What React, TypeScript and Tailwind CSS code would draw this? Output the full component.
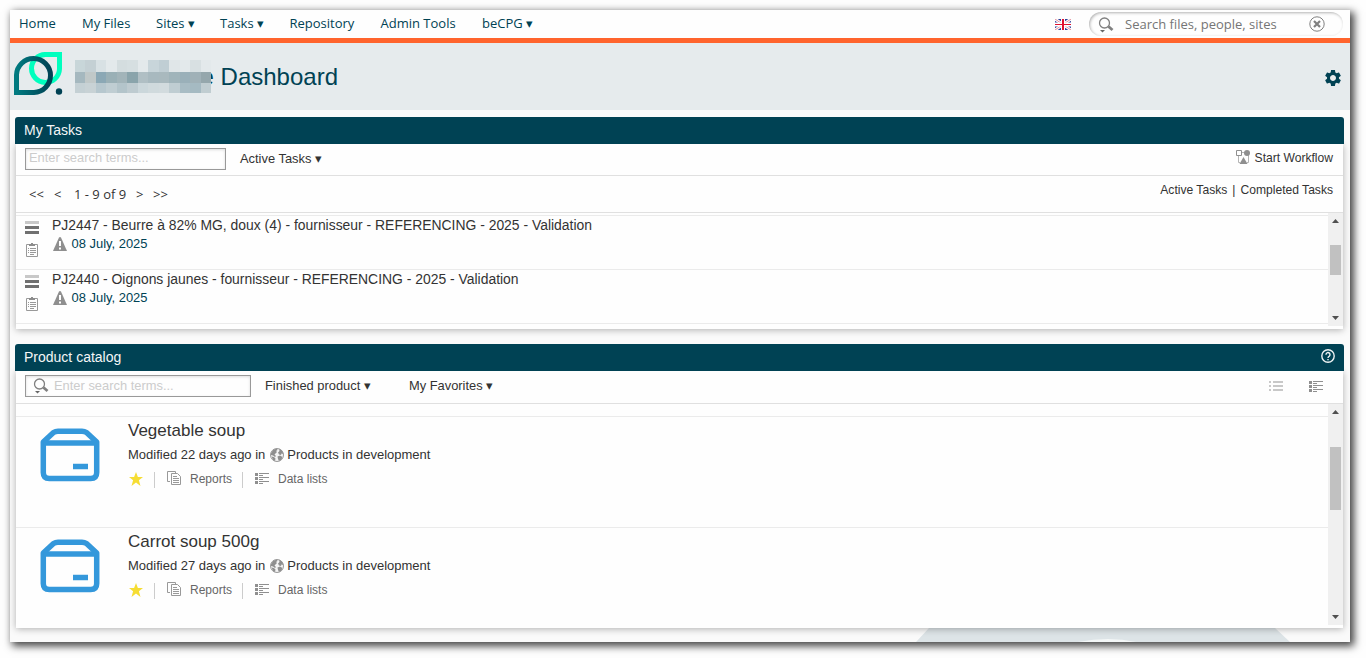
import type { ReactNode } from "react";

const mosaic = [
  ["#c8d6d9", "#c4d0d4", "#d8e1e4", "#e3e9eb", "#d4dddf", "#d6dfe1", "#e3e9eb", "#c8d5da", "#c0ced4", "#e0e6e8", "#e3e9eb", "#d8e0e2", "#e3e9eb"],
  ["#a5b8bf", "#c0c8c8", "#8ba8b5", "#9ab0b6", "#a2b4b9", "#8aa4ab", "#b0bfc4", "#a8b9bf", "#a9b9be", "#a0b4ba", "#9ab0b9", "#a0b1b7", "#95a7ac"],
  ["#c4d0d4", "#c8d2d5", "#b6c7ce", "#bfcdd2", "#b3c4ca", "#becbd0", "#cbd7db", "#d0dadd", "#d2dbde", "#bfcdd2", "#a8bcc4", "#a5bac2", "#c0cdd1"],
];

function ProjectLogo() {
  return (
    <svg width="50" height="44" viewBox="0 0 50 44" fill="none">
      <defs>
        <linearGradient id="drop" x1="0" y1="0" x2="1" y2="0">
          <stop offset="0" stopColor="#007a80" />
          <stop offset="1" stopColor="#004254" />
        </linearGradient>
      </defs>
      <path d="M45.500 2.500H32A14 14 0 1 0 45.500 17Z" stroke="#00ffbe" strokeWidth="5" />
      <path d="M2.500 40.500V23A17 17 0 1 1 20 40.500Z" stroke="url(#drop)" strokeWidth="5" />
      <circle cx="45" cy="39.500" r="3.200" fill="#004254" />
    </svg>
  );
}

function SearchIcon() {
  return (
    <svg width="16" height="16" viewBox="0 0 16 16" fill="none">
      <circle cx="6.500" cy="6" r="5" stroke="#808080" strokeWidth="1.300" />
      <path d="M10.500 9.500l4 3.500" stroke="#808080" strokeWidth="2.800" />
      <path d="M2 13h5l-2.500 2.500z" fill="#666" />
    </svg>
  );
}

function FlagIcon() {
  return (
    <svg width="16" height="11" viewBox="0 0 16 11">
      <path fill="#30409a" d="M0 0h16v11H0z" />
      <path d="M0 0l16 11M16 0L0 11" stroke="#fff" strokeWidth="3" />
      <path d="M0 0l16 11M16 0L0 11" stroke="#e0808e" strokeWidth=".9" />
      <path d="M8 0v11M0 5.500h16" stroke="#fff" strokeWidth="4" />
      <path d="M8 0v11" stroke="#e01030" strokeWidth="2" />
      <path d="M0 5.500h16" stroke="#e01030" />
    </svg>
  );
}

function WorkflowIcon() {
  return (
    <svg width="15" height="15" viewBox="0 0 15 15" fill="none">
      <path d="M5.500 2.500H9M2.500 5v7.500H4M12.500 5v7.500H11" stroke="#b5b5b5" />
      <path d="M.5.500h5v5h-5z" stroke="#8f8f8f" />
      <circle cx="11" cy="3" r="3" fill="#8f8f8f" />
      <path d="M7.500 7l4 7h-8z" fill="#8f8f8f" />
    </svg>
  );
}

function TaskIcon() {
  return (
    <svg width="12" height="14" viewBox="0 0 12 14" fill="none">
      <path d="M.5 1.500h11v12H.5z" stroke="#999" />
      <path d="M3 1h2V0h2v1h2v2H3z" fill="#8c8c8c" />
      <path d="M2 5.500h1M4 5.500h6M2 7.500h1M4 7.500h6M2 9.500h1M4 9.500h6M4 11.500h4" stroke="#999" />
    </svg>
  );
}

function WarningIcon() {
  return (
    <svg width="14" height="14" viewBox="0 0 14 14">
      <path d="M7 0q.7 0 1.100.8L14 14H0L5.900.8Q6.300 0 7 0z" fill="#8f8f8f" />
      <path d="M6 4h2v5H6zM6 10.500h2v2H6z" fill="#fff" />
    </svg>
  );
}

function DetailListIcon() {
  return (
    <svg width="14" height="11" viewBox="0 0 14 11" fill="#8f8f8f">
      <path d="M0 0h3v3H0zM0 4h3v3H0zM0 8h3v3H0zM4 0h10v1H4zM4 2h4v1H4zM4 4h10v1H4zM4 6h4v1H4zM4 8h10v1H4zM4 10h4v1H4z" />
    </svg>
  );
}

function SimpleListIcon() {
  return (
    <svg width="14" height="10" viewBox="0 0 14 10" fill="#c8c8c8">
      <path d="M0 0h2v2H0zM0 4h2v2H0zM0 8h2v2H0zM4 0h10v2H4zM4 4h10v2H4zM4 8h10v2H4z" />
    </svg>
  );
}

function ReportsIcon() {
  return (
    <svg width="14" height="14" viewBox="0 0 14 14" fill="none" stroke="#999">
      <path d="M3 10.500H.5V.5h8V2" />
      <path d="M4.500 2.500h6l3 3v8h-9z" />
      <path d="M6 5.500h4M6 7.500h6M6 9.500h6M6 11.500h6" />
    </svg>
  );
}

function GlobeIcon() {
  return (
    <svg width="14" height="14" viewBox="0 0 14 14">
      <circle cx="7" cy="7" r="6.500" fill="#f4f4f4" stroke="#999" />
      <path d="M1 5L3.500 1.500 7 .8 7.500 2 6 3l1 1-2.500 2.500L6 8 5 9 3 7.500 1 7zM9 .8l3 1.700 1.500 3.500-2-.5-.5 1.500-2-.5-1-2 1.500-1.500zM1.500 8.500l2.500.5 1.500 1.500-.5 2.500L3 12zM7.500 8.500L10 7.500l2.500 1.500-1 2.500-2.500 1.500L8 11z" fill="#8f8f8f" />
    </svg>
  );
}

function ProductIcon() {
  return (
    <svg width="60" height="54" viewBox="0 0 60 54" fill="none" stroke="#3498db" strokeWidth="5.500">
      <path d="M3.300 14v30.500q0 6 6 6h41.400q6 0 6-6V14L46.500 4.500Q44.500 3.200 42 3.200H18Q15.500 3.200 13.500 4.500z" strokeLinejoin="round" />
      <path d="M3.300 15h53.400" />
      <path d="M33 38.500h15" />
    </svg>
  );
}

function Scrollbar({ children }: { children: ReactNode }) {
  return (
    <div className="flex w-[15px] shrink-0 flex-col items-center bg-[#f0f0f0]">
      <svg width="15" height="15" className="shrink-0"><path d="M4 10l3.500-4 3.500 4z" fill="#505050" /></svg>
      {children}
      <svg width="15" height="15" className="mt-auto shrink-0"><path d="M4 5l3.500 4L11 5z" fill="#505050" /></svg>
    </div>
  );
}

function Dashlet({ title, icon, children, className }: { title: string; icon?: ReactNode; children: ReactNode; className: string }) {
  return (
    <section className={className}>
      <h2 className="relative z-10 flex h-[27px] shrink-0 items-center justify-between rounded-t-[3px] bg-[#004254] px-[9px] text-[14px] text-[#f4f6f7]">
        {title}
        {icon}
      </h2>
      <div className="mx-px flex min-h-0 flex-1 flex-col bg-[#fefefe] shadow-[0_1px_7px_rgba(0,0,0,0.3)]">{children}</div>
    </section>
  );
}

function TaskRow({ title }: { title: string }) {
  return (
    <div className="flex h-[54px] shrink-0 border-b border-[#ebebeb] pl-[9px]">
      <div className="w-[27px] pt-[5px]">
        <div className="h-[3px] w-[14px] bg-[#c8c8c8]" />
        <div className="mt-[2px] h-[3px] w-[14px] bg-[#707070]" />
        <div className="mt-[2px] mb-[9px] h-[3px] w-[14px] bg-[#707070]" />
        <div className="pl-px"><TaskIcon /></div>
      </div>
      <div>
        <div className="text-[13.910px] leading-[18px]">{title}</div>
        <div className="mt-px flex items-center pl-px text-[12.950px] leading-[17px] text-[#004254]">
          <WarningIcon />
          <span className="ml-[4.500px]">08 July, 2025</span>
        </div>
      </div>
    </div>
  );
}

function ProductRow({ name, days }: { name: string; days: number }) {
  return (
    <div className="flex h-[111px] shrink-0 border-b border-[#ebebeb] pl-6">
      <div className="w-[88px] pt-[11px]"><ProductIcon /></div>
      <div>
        <div className="mt-[4px] text-[17px] leading-[20px]">{name}</div>
        <div className="mt-[5px] flex items-center text-[13px] leading-[17px]">
          Modified {days} days ago in
          <span className="mr-[3px] ml-[5px]"><GlobeIcon /></span>
          Products in development
        </div>
        <div className="mt-[7px] flex h-[17px] items-center text-[12px] text-[#666]">
          <svg width="16" height="14" viewBox="0 0 16 14" fill="#f6dd33"><path d="M8 0l1.900 5H15l-4.100 3.300L12.500 14 8 10.600 3.500 14l1.600-5.700L1 5h5.100z" /></svg>
          <span className="mt-[2px] ml-[10px] h-4 w-px bg-[#ccc]" />
          <span className="mb-px ml-[12px]"><ReportsIcon /></span>
          <span className="ml-[9px]">Reports</span>
          <span className="mt-[2px] ml-[10px] h-4 w-px bg-[#ccc]" />
          <span className="ml-[12px]"><DetailListIcon /></span>
          <span className="ml-[9px]">Data lists</span>
        </div>
      </div>
    </div>
  );
}

export default function App() {
  return (
    <div className="h-[658px] w-[1366px] overflow-hidden bg-[#fefefe] p-[10px] font-['Liberation_Sans',Arial,sans-serif] text-[#333]">
      <div className="relative flex h-[632px] w-[1340px] flex-col bg-[#fafafa] shadow-[3px_3px_8px_1px_rgba(0,0,0,0.75)]">
        <nav className="flex h-7 shrink-0 items-center bg-[#fefefe] pl-[9px] font-['Open_Sans',sans-serif] text-[13px] text-[#004254]">
          <span className="w-[63px]">Home</span>
          <span className="w-[74px]">My Files</span>
          <span className="w-[64px]">Sites ▾</span>
          <span className="w-[69.500px]">Tasks ▾</span>
          <span className="w-[91px]">Repository</span>
          <span className="w-[101.500px]">Admin Tools</span>
          <span>beCPG ▾</span>
          <span className="mr-[18px] ml-auto"><FlagIcon /></span>
          <div className="mr-[7px] flex h-6 w-[254px] items-center rounded-full pl-[9px] text-[#757575] shadow-[inset_1px_1px_3px_rgba(0,0,0,0.3)]">
            <span className="pt-px"><SearchIcon /></span>
            <span className="ml-[11px] pt-[2px]">Search files, people, sites</span>
            <svg width="16" height="16" className="mr-[18px] ml-auto" fill="none" stroke="#808080">
              <circle cx="8" cy="8" r="7.200" />
              <path d="M5 5l6 6M11 5l-6 6" strokeWidth="2.200" />
            </svg>
          </div>
        </nav>
        <div className="h-[5px] shrink-0 bg-[#ff642d]" />
        <header className="flex h-[67px] shrink-0 items-center bg-[#e6ebed] pl-[4px] text-[#004254]">
          <div className="mb-[6px]"><ProjectLogo /></div>
          <div className="relative ml-[11px] flex w-[263px] justify-end">
            <h1 className="text-[24px] leading-[33px]">e Dashboard</h1>
            {/* redacted project name */}
            <div className="absolute top-0 left-0 grid h-[33px] w-[136px] grid-cols-13 grid-rows-[12px_11px_10px]">
              {mosaic.flat().map((color, i) => (
                <div key={i} style={{ backgroundColor: color }} />
              ))}
            </div>
          </div>
          <svg width="20" height="20" viewBox="0 0 24 24" fill="#004254" className="mt-[3px] mr-[7px] ml-auto">
            <path d="M19.140 12.940c.04-.3.060-.61.060-.94 0-.32-.02-.64-.07-.94l2.030-1.580c.18-.14.230-.41.120-.61l-1.920-3.320c-.12-.22-.37-.29-.59-.22l-2.390.96c-.5-.38-1.030-.7-1.620-.94l-.36-2.540c-.04-.24-.24-.41-.48-.41h-3.840c-.24 0-.43.170-.47.410l-.36 2.540c-.59.240-1.130.570-1.620.940l-2.390-.96c-.22-.08-.47 0-.59.220L2.740 8.870c-.12.210-.08.470.120.610l2.030 1.580c-.05.300-.09.630-.09.940s.02.640.070.940l-2.030 1.580c-.18.140-.23.410-.12.610l1.920 3.320c.12.220.370.290.590.220l2.390-.96c.5.380 1.030.700 1.620.940l.36 2.540c.05.240.240.410.480.410h3.840c.24 0 .44-.17.470-.41l.36-2.540c.59-.24 1.130-.56 1.620-.94l2.390.96c.22.080.470 0 .59-.22l1.920-3.320c.12-.22.070-.47-.12-.61l-2.010-1.580zM12 15.600c-1.980 0-3.600-1.620-3.600-3.600s1.620-3.600 3.600-3.600 3.600 1.620 3.600 3.600-1.620 3.600-3.600 3.600z" />
          </svg>
        </header>

        <svg width="374" height="14" viewBox="0 0 374 14" className="absolute bottom-0 left-[906px]">
          <path d="M0 14L13 0h346l15 14z" fill="#dde4e7" />
          <path d="M162 14q31-6 58 0z" fill="#f4f7f7" />
        </svg>

        <main className="relative flex flex-1 flex-col pt-[7px] pr-[6px] pl-[5px]">
          <Dashlet title="My Tasks" className="mb-[15px] flex h-[212px] flex-col">
            <div className="flex h-8 shrink-0 items-center border-b border-[#e0e0e0] px-[9px] text-[13px]">
              <div className="mb-px h-[22px] w-[201px] border border-[#999] pl-[3px] text-[12.900px] leading-[18px] text-[#ccc] shadow-[inset_0_1px_3px_#ddd]">Enter search terms...</div>
              <span className="mb-[2px] ml-[14px] text-[12.900px]">Active Tasks ▾</span>
              <span className="mr-[4px] mb-[4px] ml-auto"><WorkflowIcon /></span>
              <span className="mr-px mb-[3px] text-[12.100px]">Start Workflow</span>
            </div>
            <div className="flex h-[37px] shrink-0 items-center border-b border-[#e0e0e0] pr-[10px] pl-[13px]">
              <div className="mt-[2px] flex font-['Open_Sans',sans-serif] text-[13px]">
                <span className="w-[25px]">&lt;&lt;</span>
                <span className="w-[20px]">&lt;</span>
                <span className="w-[62px]">1 - 9 of 9</span>
                <span className="w-[17px]">&gt;</span>
                <span>&gt;&gt;</span>
              </div>
              <div className="mb-[7px] ml-auto text-[12.100px]">
                Active Tasks<span className="mx-[5px]">|</span>Completed Tasks
              </div>
            </div>
            <div className="mb-[3px] flex min-h-0 flex-1">
              <div className="flex-1 overflow-hidden">
                <div className="h-[3px] border-b border-[#ebebeb]" />
                <TaskRow title="PJ2447 - Beurre à 82% MG, doux (4) - fournisseur - REFERENCING - 2025 - Validation" />
                <TaskRow title="PJ2440 - Oignons jaunes - fournisseur - REFERENCING - 2025 - Validation" />
              </div>
              <Scrollbar><div className="mt-[17px] h-[30px] w-[11px] bg-[#c1c1c1]" /></Scrollbar>
            </div>
          </Dashlet>

          <Dashlet
            title="Product catalog"
            className="flex h-[284px] flex-col"
            icon={
              <svg width="14" height="14" viewBox="0 0 14 14" fill="none" stroke="#eef2f3" strokeWidth="1.400" className="mb-[3px]">
                <circle cx="7" cy="7" r="6.200" />
                <path d="M5 5.700a2 2 0 1 1 3.300 1.400Q7 7.900 7 9M7 9.900v1.400" />
              </svg>
            }
          >
            <div className="flex h-[33px] shrink-0 items-center border-b border-[#e0e0e0] px-[9px] text-[12.900px]">
              <div className="mb-[2px] flex h-[22px] w-[226px] items-center border border-[#999] pl-[7px] text-[#ccc] shadow-[inset_0_1px_3px_#ddd]">
                <SearchIcon />
                <span className="ml-[5px]">Enter search terms...</span>
              </div>
              <span className="mb-[3px] ml-[14px]">Finished product ▾</span>
              <span className="mb-[3px] ml-[38px]">My Favorites ▾</span>
              <span className="mr-[26px] mb-[2px] ml-auto"><SimpleListIcon /></span>
              <span className="mr-[11px] mb-px"><DetailListIcon /></span>
            </div>
            <div className="mb-[3px] flex min-h-0 flex-1">
              <div className="flex-1 overflow-hidden">
                <div className="h-[13px] border-b border-[#ebebeb]" />
                <ProductRow name="Vegetable soup" days={22} />
                <ProductRow name="Carrot soup 500g" days={27} />
              </div>
              <Scrollbar><div className="mt-[28px] h-[63px] w-[11px] bg-[#c1c1c1]" /></Scrollbar>
            </div>
          </Dashlet>
        </main>
      </div>
    </div>
  );
}
